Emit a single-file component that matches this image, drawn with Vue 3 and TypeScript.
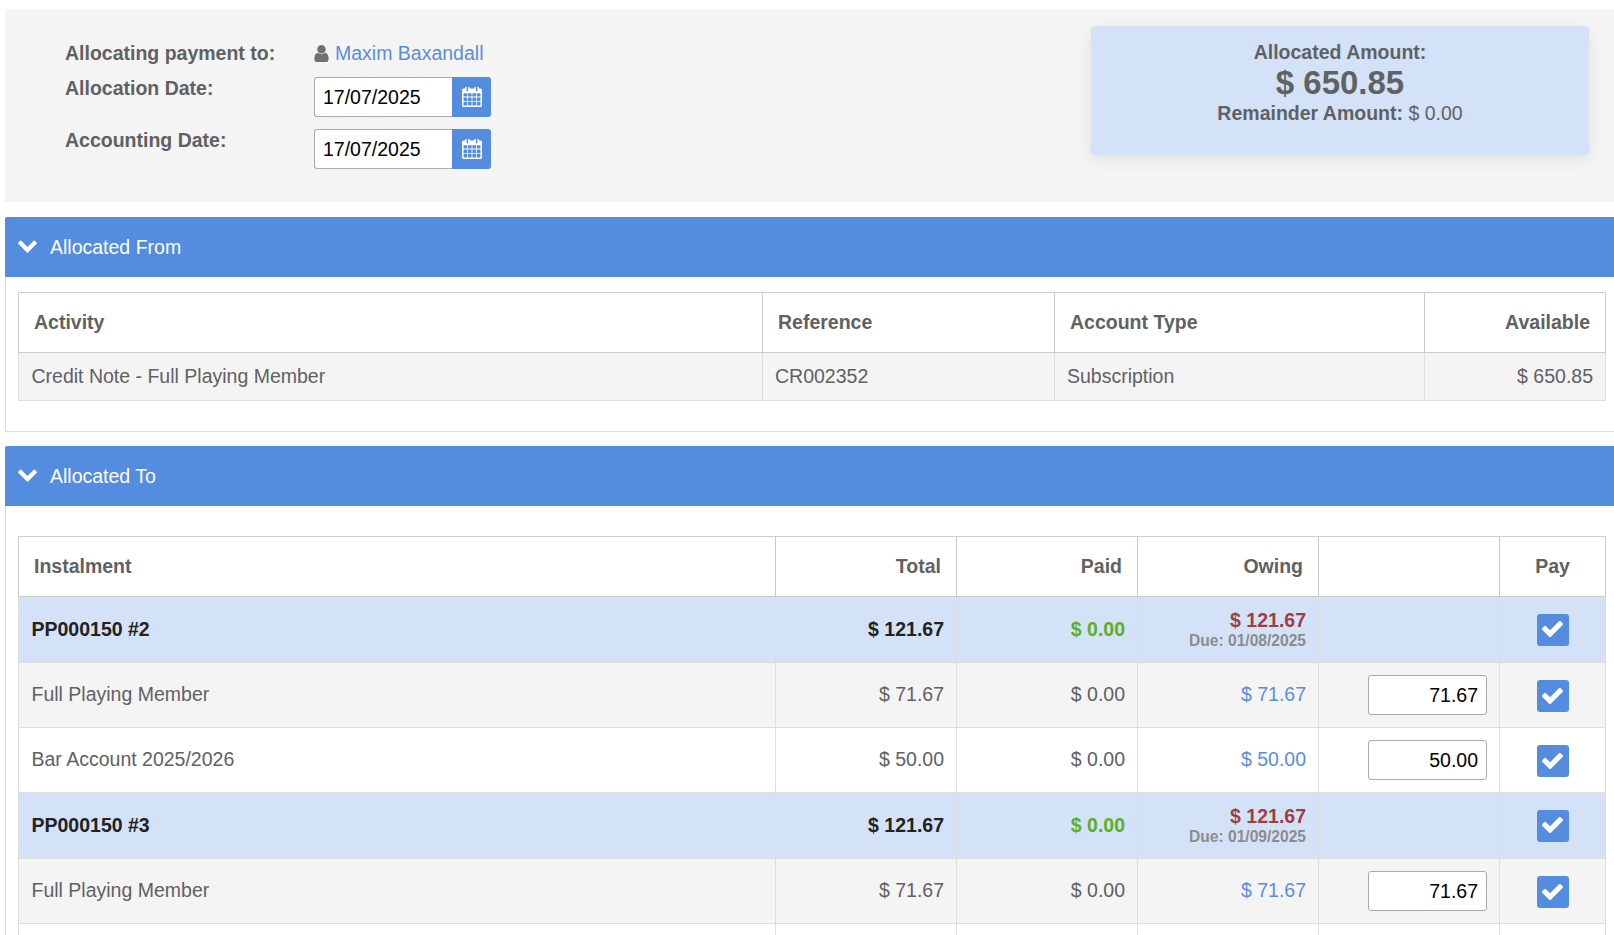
<script setup lang="ts">
import { ref } from 'vue'

interface Row {
  kind: 'head' | 'line'
  name: string
  total: string
  paid: string
  owing: string
  due?: string
  pay?: string
}

const allocationDate = ref('17/07/2025')
const accountingDate = ref('17/07/2025')

const rows = ref<Row[]>([
  { kind: 'head', name: 'PP000150 #2', total: '$ 121.67', paid: '$ 0.00', owing: '$ 121.67', due: 'Due: 01/08/2025' },
  { kind: 'line', name: 'Full Playing Member', total: '$ 71.67', paid: '$ 0.00', owing: '$ 71.67', pay: '71.67' },
  { kind: 'line', name: 'Bar Account 2025/2026', total: '$ 50.00', paid: '$ 0.00', owing: '$ 50.00', pay: '50.00' },
  { kind: 'head', name: 'PP000150 #3', total: '$ 121.67', paid: '$ 0.00', owing: '$ 121.67', due: 'Due: 01/09/2025' },
  { kind: 'line', name: 'Full Playing Member', total: '$ 71.67', paid: '$ 0.00', owing: '$ 71.67', pay: '71.67' }
])

const calendarPath =
  'M192 1664h288v-288h-288v288zm352 0h320v-288h-320v288zm-352-352h288v-320h-288v320zm352 0h320v-320h-320v320zm-352-384h288v-288h-288v288zm736 736h320v-288h-320v288zm-384-736h320v-288h-320v288zm768 736h288v-288h-288v288zm-384-352h320v-320h-320v320zm-352-864v-288q0-13-9.5-22.5t-22.5-9.5h-64q-13 0-22.5 9.5t-9.5 22.5v288q0 13 9.5 22.5t22.5 9.5h64q13 0 22.5-9.5t9.5-22.5zm736 864h288v-320h-288v320zm-384-384h320v-288h-320v288zm384 0h288v-288h-288v288zm32-480v-288q0-13-9.5-22.5t-22.5-9.5h-64q-13 0-22.5 9.5t-9.5 22.5v288q0 13 9.5 22.5t22.5 9.5h64q13 0 22.5-9.5t9.5-22.5zm384-64v1280q0 52-38 90t-90 38h-1408q-52 0-90-38t-38-90v-1280q0-52 38-90t90-38h128v-96q0-66 47-113t113-47h64q66 0 113 47t47 113v96h384v-96q0-66 47-113t113-47h64q66 0 113 47t47 113v96h128q52 0 90 38t38 90z'
const chevronPath =
  'M1683 808l-742 741q-19 19-45 19t-45-19l-742-741q-19-19-19-45.5t19-45.5l166-165q19-19 45-19t45 19l531 531 531-531q19-19 45-19t45 19l166 165q19 19 19 45.5t-19 45.5z'
const checkPath =
  'M1671 566q0 40-28 68l-724 724-136 136q-28 28-68 28t-68-28l-136-136-362-362q-28-28-28-68t28-68l136-136q28-28 68-28t68 28l294 295 656-657q28-28 68-28t68 28l136 136q28 28 28 68z'
const userPath =
  'M1536 1399q0 109-62.5 187t-150.5 78h-854q-88 0-150.5-78t-62.5-187q0-85 8.5-160.5t31.5-152 58.5-131 94-89 134.5-34.5q131 128 313 128t313-128q76 0 134.5 34.5t94 89 58.5 131 31.5 152 8.5 160.5zm-256-887q0 159-112.5 271.5t-271.5 112.5-271.5-112.5-112.5-271.5 112.5-271.5 271.5-112.5 271.5 112.5 112.5 271.5z'
</script>

<template>
  <div class="page">
    <section class="top">
      <div class="form">
        <div class="label">Allocating payment to:</div>
        <div class="payee">
          <svg class="user" viewBox="256 128 1280 1536"><path :d="userPath" /></svg>
          <a class="link">Maxim Baxandall</a>
        </div>
        <div class="label">Allocation Date:</div>
        <div class="date">
          <input v-model="allocationDate" type="text" />
          <span class="cal"><svg viewBox="64 128 1664 1664"><path :d="calendarPath" /></svg></span>
        </div>
        <div class="label">Accounting Date:</div>
        <div class="date">
          <input v-model="accountingDate" type="text" />
          <span class="cal"><svg viewBox="64 128 1664 1664"><path :d="calendarPath" /></svg></span>
        </div>
      </div>
      <aside class="summary">
        <div class="sum-title">Allocated Amount:</div>
        <div class="sum-amount">$ 650.85</div>
        <div class="sum-rest"><b>Remainder Amount:</b> $ 0.00</div>
      </aside>
    </section>

    <section class="panel first">
      <header class="bar">
        <svg class="chev" viewBox="90 330 1612 1238"><path :d="chevronPath" /></svg>
        <span>Allocated From</span>
      </header>
      <div class="body from-body">
        <table>
          <colgroup>
            <col style="width: 744px" />
            <col style="width: 292px" />
            <col style="width: 370px" />
            <col />
          </colgroup>
          <thead>
            <tr>
              <th>Activity</th>
              <th>Reference</th>
              <th>Account Type</th>
              <th class="right">Available</th>
            </tr>
          </thead>
          <tbody>
            <tr class="grey short">
              <td>Credit Note - Full Playing Member</td>
              <td>CR002352</td>
              <td>Subscription</td>
              <td class="right">$ 650.85</td>
            </tr>
          </tbody>
        </table>
      </div>
    </section>

    <section class="panel second">
      <header class="bar">
        <svg class="chev" viewBox="90 330 1612 1238"><path :d="chevronPath" /></svg>
        <span>Allocated To</span>
      </header>
      <div class="body to-body">
        <table>
          <colgroup>
            <col style="width: 757px" />
            <col style="width: 181px" />
            <col style="width: 181px" />
            <col style="width: 181px" />
            <col style="width: 181px" />
            <col />
          </colgroup>
          <thead>
            <tr>
              <th>Instalment</th>
              <th class="right">Total</th>
              <th class="right">Paid</th>
              <th class="right">Owing</th>
              <th></th>
              <th class="center">Pay</th>
            </tr>
          </thead>
          <tbody>
            <tr
              v-for="(row, i) in rows"
              :key="i"
              :class="row.kind === 'head' ? 'head' : i % 3 === 1 ? 'grey line' : 'plain line'"
            >
              <td class="txt">{{ row.name }}</td>
              <td class="right txt">{{ row.total }}</td>
              <td class="right txt" :class="{ green: row.kind === 'head' }">{{ row.paid }}</td>
              <td class="right txt">
                <template v-if="row.kind === 'head'">
                  <div class="red">{{ row.owing }}</div>
                  <div class="due">{{ row.due }}</div>
                </template>
                <span v-else class="link">{{ row.owing }}</span>
              </td>
              <td class="right">
                <input v-if="row.pay" class="amount" type="text" :value="row.pay" />
              </td>
              <td class="center pay">
                <span class="check"><svg viewBox="121 350 1550 1232"><path :d="checkPath" /></svg></span>
              </td>
            </tr>
            <tr class="stub">
              <td></td>
              <td></td>
              <td></td>
              <td></td>
              <td></td>
              <td></td>
            </tr>
          </tbody>
        </table>
      </div>
    </section>
  </div>
</template>

<style>
html,
body {
  margin: 0;
  height: 100%;
  overflow: hidden;
  background: #fff;
}
</style>

<style scoped>
.page {
  box-sizing: border-box;
  padding: 9px 0 0 5px;
  font-family: "Liberation Sans", Arial, sans-serif;
  font-size: 19.5px;
  line-height: 23px;
  color: #606162;
}
.top {
  box-sizing: border-box;
  height: 193px;
  padding: 17px 25px 0 60px;
  display: flex;
  justify-content: space-between;
  align-items: flex-start;
  background: #f4f4f4;
}
.form {
  display: grid;
  grid-template-columns: 249px auto;
  grid-template-rows: 35px 52px 52px;
  padding-top: 16px;
}
.label {
  font-weight: 700;
}
.payee {
  display: flex;
  align-items: center;
  height: 23px;
  gap: 6px;
}
.user {
  width: 15px;
  height: 17px;
  fill: #707070;
}
.link {
  color: #5a8de0;
}
.date {
  display: flex;
  width: 177px;
  height: 40px;
}
.date input {
  box-sizing: border-box;
  width: 138px;
  height: 40px;
  padding: 0 8px;
  border: 1px solid #aaa;
  border-right: 0;
  border-radius: 3px 0 0 3px;
  background: #fff;
  color: #000;
  font: 19.5px "Liberation Sans", Arial, sans-serif;
  outline: none;
}
.cal {
  width: 39px;
  height: 40px;
  display: flex;
  align-items: center;
  justify-content: center;
  background: #548ce0;
  border-radius: 0 3px 3px 0;
}
.cal svg {
  width: 20px;
  height: 20px;
  fill: #fff;
}
.summary {
  box-sizing: border-box;
  width: 498px;
  height: 129px;
  padding-top: 15px;
  text-align: center;
  background: #d4e2f8;
  border-radius: 3px;
  box-shadow: 0 5px 15px rgba(0, 0, 0, 0.08);
}
.sum-title {
  font-weight: 700;
}
.sum-amount {
  font-weight: 700;
  font-size: 33px;
  line-height: 37px;
}
.sum-rest {
  margin-top: 1px;
}
.panel.first {
  margin-top: 15px;
}
.panel.second {
  margin-top: 14px;
}
.bar {
  height: 60px;
  display: flex;
  align-items: center;
  gap: 13px;
  padding-left: 13px;
  background: #548ce0;
  color: #fff;
  border-radius: 2px 0 0 0;
}
.chev {
  width: 19px;
  height: 15px;
  margin-top: -3px;
  fill: #fff;
}
.body {
  box-sizing: border-box;
  padding-left: 12px;
  padding-right: 9px;
  border-left: 1px solid #ddd;
}
.from-body {
  padding-top: 15px;
  height: 155px;
  border-bottom: 1px solid #ddd;
}
.to-body {
  padding-top: 30px;
}
table {
  width: 1588px;
  table-layout: fixed;
  border-collapse: collapse;
}
th {
  height: 59px;
  padding: 0 15px;
  text-align: left;
  font-weight: 700;
  background: #fff;
  border: 1px solid #ccc;
}
td {
  height: 64px;
  padding: 0 12px;
  border: 1px solid #ddd;
}
td:first-child {
  padding-left: 12.5px;
}
.right {
  text-align: right;
}
.center {
  text-align: center;
}
tr.short td {
  height: 47px;
}
tr.stub td {
  height: 12px;
  border-bottom: 0;
  background: #fff;
}
tr.grey td {
  background: #f4f4f4;
}
tr.plain td {
  background: #fff;
}
tr.line td {
  height: 62px;
}
tr.line td.txt {
  padding-bottom: 2px;
}
tr.line td.pay {
  padding-top: 2px;
}
tr.head td {
  height: 65px;
  background: #d4e2f8;
  font-weight: 700;
  color: #222;
}
tr.head td.green {
  color: #5cb01e;
}
tr.head td .red {
  color: #9e3f3f;
  line-height: 21px;
}
tr.head td .due {
  color: #8c8c8c;
  font-size: 15.6px;
  line-height: 19px;
}
.amount {
  box-sizing: border-box;
  display: inline-block;
  vertical-align: middle;
  width: 119px;
  height: 40px;
  padding: 0 8px;
  text-align: right;
  border: 1px solid #aaa;
  border-radius: 3px;
  background: #fff;
  color: #000;
  font: 19.5px "Liberation Sans", Arial, sans-serif;
  outline: none;
}
.check {
  display: inline-flex;
  vertical-align: middle;
  align-items: center;
  justify-content: center;
  width: 32px;
  height: 32px;
  background: #548ce0;
  border-radius: 3px;
}
.check svg {
  width: 21px;
  height: 17px;
  fill: #fff;
}
</style>
